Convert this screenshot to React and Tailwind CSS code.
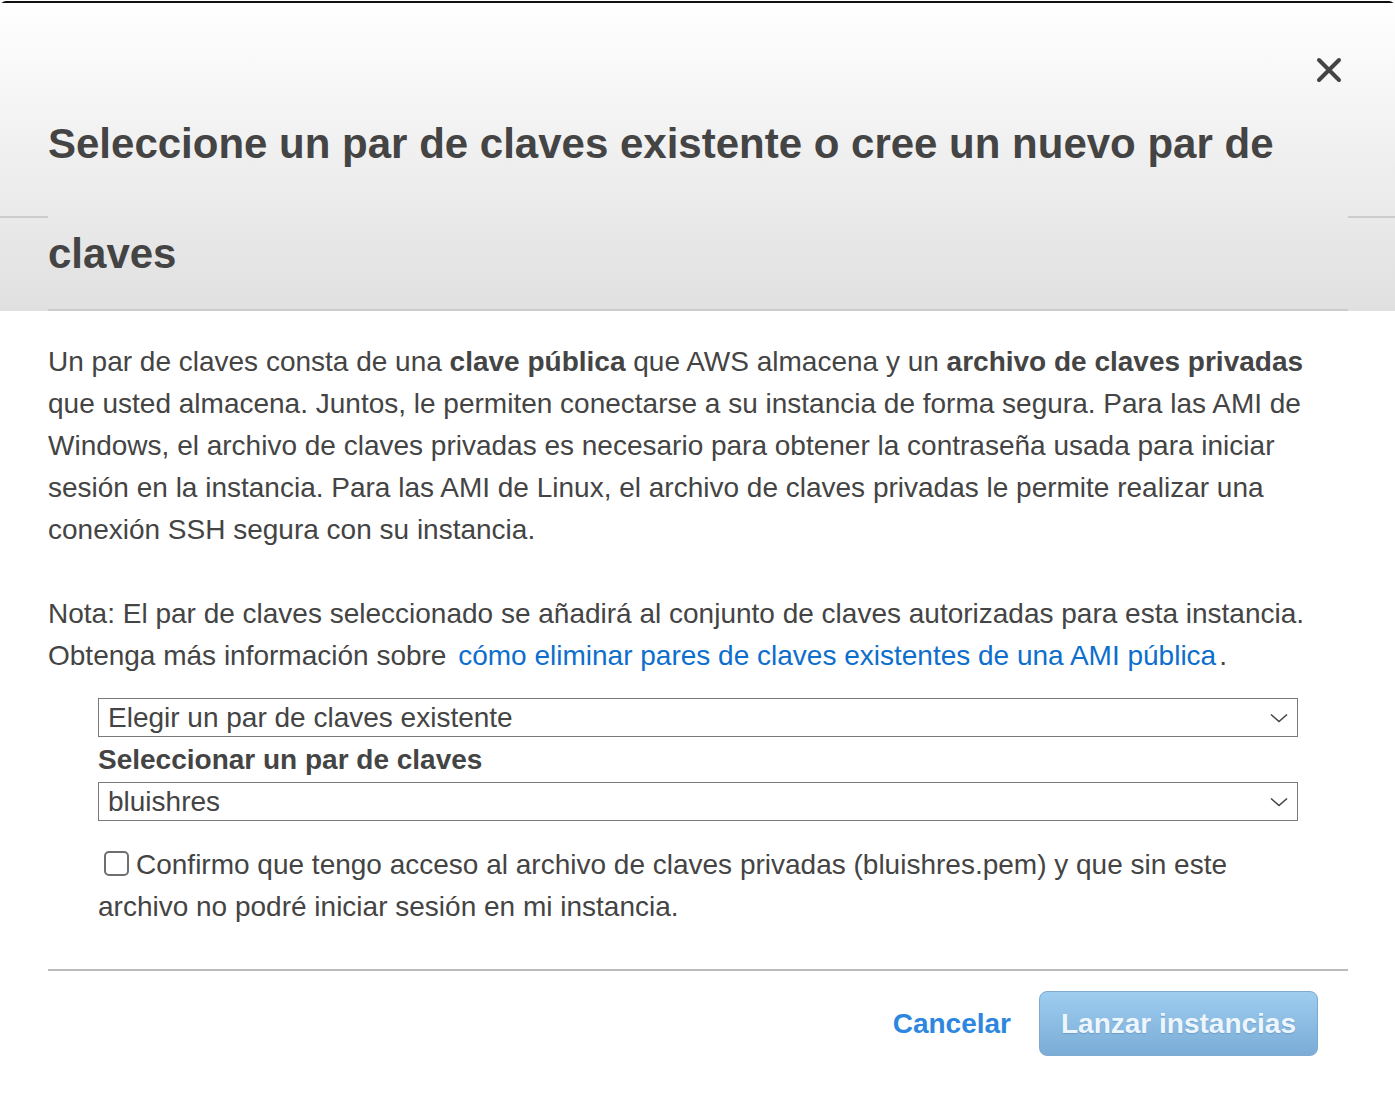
import React, { useState } from 'react';

function Chevron() {
  return (
    <svg width="18" height="10" viewBox="0 0 18 10" fill="none">
      <path d="M1 1.5 L9 8.5 L17 1.5" stroke="#444" strokeWidth="1.6" />
    </svg>
  );
}

function FakeSelect({ value }) {
  return (
    <div className="h-[39px] border border-[#7a7a7a] bg-white flex items-center justify-between pl-[9px] pr-[9px]">
      <span className="text-[28px] leading-none text-[#444]">{value}</span>
      <Chevron />
    </div>
  );
}

export default function App() {
  const [agree, setAgree] = useState(false);

  return (
    <div className="min-h-screen bg-white pt-px font-['Liberation_Sans',Arial,sans-serif]">
      <div className="border-t-2 border-[#111] rounded-t-[6px] bg-white">
        {/* Cabecera */}
        <div className="flex bg-gradient-to-b from-white to-[#e0e0e0]">
          <div className="w-12 shrink-0 h-[215px] border-b-2 border-[#cccccc]" />
          <div className="flex-1 border-b-2 border-[#cccccc]">
            <div className="flex justify-end pt-[54px]">
              <button className="mr-[6px] w-[26px] h-[26px] flex items-center justify-center">
                <svg width="26" height="26" viewBox="0 0 26 26">
                  <path d="M3 3 L23 23 M23 3 L3 23" stroke="#444" strokeWidth="4" strokeLinecap="round" />
                </svg>
              </button>
            </div>
            <h2 className="mt-[6px] text-[42px] leading-[110px] font-bold text-[#444]">
              Seleccione un par de claves existente o cree un nuevo par de claves
            </h2>
          </div>
          <div className="w-[47px] shrink-0 h-[215px] border-b-2 border-[#cccccc]" />
        </div>

        {/* Contenido */}
        <div className="pl-12 pr-[47px] pt-[30px] text-[28px] leading-[42px] text-[#444]">
          <p className="mb-[42px]">
            Un par de claves consta de una <b>clave pública</b> que AWS almacena y un <b>archivo de claves privadas</b> que usted almacena. Juntos, le permiten conectarse a su instancia de forma segura. Para las AMI de Windows, el archivo de claves privadas es necesario para obtener la contraseña usada para iniciar sesión en la instancia. Para las AMI de Linux, el archivo de claves privadas le permite realizar una conexión SSH segura con su instancia.
          </p>
          <p>
            Nota: El par de claves seleccionado se añadirá al conjunto de claves autorizadas para esta instancia. Obtenga más información sobre{' '}
            <a href="#" className="ml-1 mr-[3px] text-[#0d6ecd]">cómo eliminar pares de claves existentes de una AMI pública</a>.
          </p>

          <div className="mx-[50px] mt-[21px]">
            <FakeSelect value="Elegir un par de claves existente" />
            <div className="font-bold leading-[45px]">Seleccionar un par de claves</div>
            <FakeSelect value="bluishres" />
            <p className="mt-[23px]">
              <input
                type="checkbox"
                checked={agree}
                onChange={(e) => setAgree(e.target.checked)}
                className="appearance-none w-[25px] h-[25px] border-2 border-[#6f6f6f] rounded-[5px] bg-white ml-[6px] mr-[7px] align-[-2px]"
              />
              Confirmo que tengo acceso al archivo de claves privadas (bluishres.pem) y que sin este archivo no podré iniciar sesión en mi instancia.
            </p>
          </div>

          <div className="mt-[41px] border-t-2 border-[#bbbbbb]" />

          <div className="flex justify-end items-center gap-[28px] pr-[30px] mt-[20px]">
            <button className="font-bold text-[28px] text-[#2e87de]">Cancelar</button>
            <button className="h-[65px] px-[21px] rounded-[8px] border border-[#7eaad0] bg-gradient-to-b from-[#9ecdf0] to-[#7aacd6] font-bold text-[28px] text-[#eef6fd] [text-shadow:0_1px_1px_rgba(60,110,160,0.35)]">
              Lanzar instancias
            </button>
          </div>
        </div>
      </div>
    </div>
  );
}
